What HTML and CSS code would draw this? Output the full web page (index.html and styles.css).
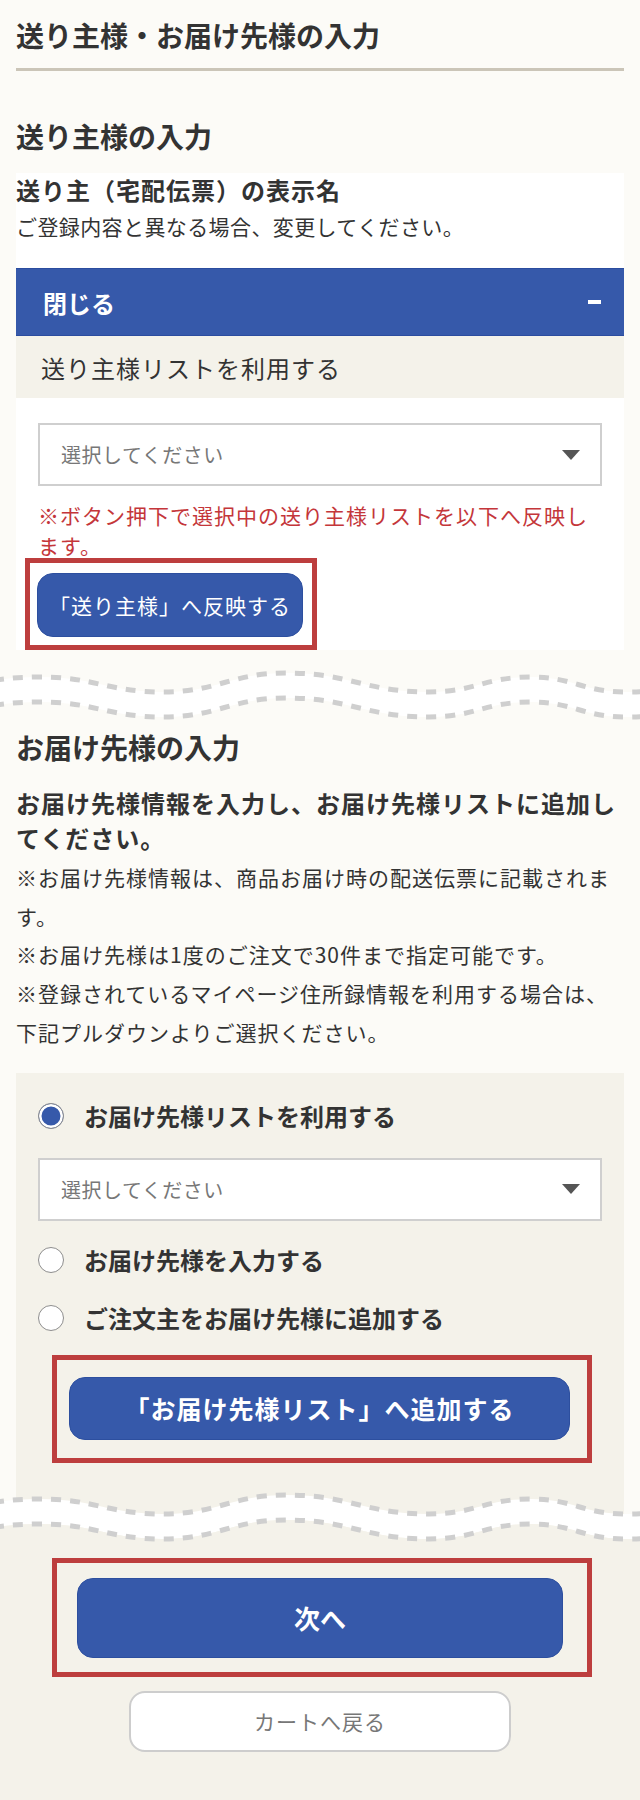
FILE: index.html
```html
<!DOCTYPE html>
<html lang="ja">
<head>
<meta charset="utf-8">
<title>送り主様・お届け先様の入力</title>
<link rel="stylesheet" href="styles.css">
</head>
<body>
<div class="page">
  <h1 class="page-title">送り主様・お届け先様の入力</h1>

  <section class="sender">
    <h2 class="sec-title sec-title-first">送り主様の入力</h2>
    <div class="sender-box">
      <p class="field-label">送り主（宅配伝票）の表示名</p>
      <p class="field-hint">ご登録内容と異なる場合、変更してください。</p>
      <div class="acc-head"><span>閉じる</span><span class="minus"></span></div>
      <div class="acc-sub">送り主様リストを利用する</div>
      <div class="acc-body">
        <div class="select"><span>選択してください</span><span class="caret"></span></div>
        <p class="warn">※ボタン押下で選択中の送り主様リストを以下へ反映します。</p>
        <div class="hl hl-reflect"><button class="btn btn-reflect">「送り主様」へ反映する</button></div>
      </div>
    </div>
  </section>

  <div class="wave wave-1">
    <svg width="640" height="70" viewBox="0 0 640 70">
      <g transform="translate(0,5)">
        <path class="band" d="M-100,30 C-37,30 -23,15 40,15 C95,15 108,30 163,30 C218,30 231,11 286,11 C350,11 365,30 429,30 C475,30 485,15 531,15 C573,15 583,30 625,30 C686,30 699,15 760,15 L760,40 C699,40 686,55 625,55 C583,55 573,40 531,40 C485,40 475,55 429,55 C365,55 350,36 286,36 C231,36 218,55 163,55 C108,55 95,40 40,40 C-23,40 -37,55 -100,55 Z"/>
        <path class="dash" d="M-100,30 C-37,30 -23,15 40,15 C95,15 108,30 163,30 C218,30 231,11 286,11 C350,11 365,30 429,30 C475,30 485,15 531,15 C573,15 583,30 625,30 C686,30 699,15 760,15"/>
        <path class="dash" d="M-100,55 C-37,55 -23,40 40,40 C95,40 108,55 163,55 C218,55 231,36 286,36 C350,36 365,55 429,55 C475,55 485,40 531,40 C573,40 583,55 625,55 C686,55 699,40 760,40"/>
      </g>
    </svg>
  </div>

  <section class="dest">
    <h2 class="sec-title">お届け先様の入力</h2>
    <p class="intro">お届け先様情報を入力し、お届け先様リストに追加してください。</p>
    <div class="notes">
      <p>※お届け先様情報は、商品お届け時の配送伝票に記載されます。</p>
      <p>※お届け先様は1度のご注文で30件まで指定可能です。</p>
      <p>※登録されているマイページ住所録情報を利用する場合は、下記プルダウンよりご選択ください。</p>
    </div>
    <div class="panel">
      <div class="radio-row"><span class="radio radio-on"></span><span class="radio-label">お届け先様リストを利用する</span></div>
      <div class="select select-dest"><span>選択してください</span><span class="caret"></span></div>
      <div class="radio-row radio-row-2"><span class="radio"></span><span class="radio-label">お届け先様を入力する</span></div>
      <div class="radio-row radio-row-3"><span class="radio"></span><span class="radio-label">ご注文主をお届け先様に追加する</span></div>
      <div class="hl hl-add"><button class="btn btn-add">「お届け先様リスト」へ追加する</button></div>
    </div>
  </section>

  <div class="wave wave-2">
    <svg width="640" height="70" viewBox="0 0 640 70">
      <g transform="translate(0,4)">
        <path class="band" d="M-100,30 C-37,30 -23,15 40,15 C95,15 108,30 163,30 C218,30 231,11 286,11 C350,11 365,30 429,30 C475,30 485,15 531,15 C573,15 583,30 625,30 C686,30 699,15 760,15 L760,40 C699,40 686,55 625,55 C583,55 573,40 531,40 C485,40 475,55 429,55 C365,55 350,36 286,36 C231,36 218,55 163,55 C108,55 95,40 40,40 C-23,40 -37,55 -100,55 Z"/>
        <path class="below" d="M-100,55 C-37,55 -23,40 40,40 C95,40 108,55 163,55 C218,55 231,36 286,36 C350,36 365,55 429,55 C475,55 485,40 531,40 C573,40 583,55 625,55 C686,55 699,40 760,40 L760,80 L-100,80 Z"/>
        <path class="dash" d="M-100,30 C-37,30 -23,15 40,15 C95,15 108,30 163,30 C218,30 231,11 286,11 C350,11 365,30 429,30 C475,30 485,15 531,15 C573,15 583,30 625,30 C686,30 699,15 760,15"/>
        <path class="dash" d="M-100,55 C-37,55 -23,40 40,40 C95,40 108,55 163,55 C218,55 231,36 286,36 C350,36 365,55 429,55 C475,55 485,40 531,40 C573,40 583,55 625,55 C686,55 699,40 760,40"/>
      </g>
    </svg>
  </div>

  <footer class="foot">
    <div class="hl hl-next"><button class="btn btn-next">次へ</button></div>
    <button class="btn-back">カートへ戻る</button>
  </footer>
</div>
</body>
</html>
```

FILE: styles.css
```css
* {
  box-sizing: border-box;
  margin: 0;
  padding: 0;
}

body {
  background: #fcfbf7;
  font-family: "Noto Sans CJK JP", "Noto Sans", sans-serif;
  color: #333;
}

.page {
  width: 640px;
}

.page-title {
  margin: 0 16px;
  padding: 15px 0 13px;
  font-size: 28px;
  line-height: 40px;
  font-weight: 700;
  border-bottom: 3px solid #cbc5b8;
}

.sec-title {
  margin: 0 16px;
  font-size: 28px;
  line-height: 40px;
  font-weight: 700;
}

.sec-title-first {
  margin-top: 45px;
}

.sender-box {
  margin: 17px 16px 0;
  background: #fff;
}

.field-label {
  font-size: 24px;
  line-height: 34px;
  font-weight: 700;
  letter-spacing: 1px;
}

.field-hint {
  margin-top: 4px;
  font-size: 21px;
  line-height: 30px;
  letter-spacing: 0.4px;
}

.acc-head {
  margin-top: 27px;
  height: 68px;
  background: #3659aa;
  border-top: 1px solid #2b4c9f;
  border-bottom: 1px solid #2b4c9f;
  display: flex;
  align-items: center;
  justify-content: space-between;
  padding: 0 23px 0 27px;
  color: #fff;
  font-size: 24px;
  font-weight: 700;
}

.minus {
  width: 13px;
  height: 4px;
  background: #fff;
}

.acc-sub {
  height: 62px;
  background: #f4f2ea;
  display: flex;
  align-items: center;
  padding-left: 25px;
  font-size: 24px;
  letter-spacing: 1px;
}

.acc-body {
  padding: 25px 22px 0;
}

.select {
  height: 63px;
  border: 2px solid #cfcfcf;
  background: #fff;
  display: flex;
  align-items: center;
  justify-content: space-between;
  padding: 0 20px 0 21px;
  font-size: 20px;
  color: #777;
  letter-spacing: 0.5px;
}

.caret {
  width: 0;
  height: 0;
  border-left: 9px solid transparent;
  border-right: 9px solid transparent;
  border-top: 10px solid #555;
}

.warn {
  margin-top: 14px;
  font-size: 21px;
  line-height: 30px;
  letter-spacing: 1px;
  color: #c4363a;
}

.hl {
  border: 5px solid #bd3e3e;
}

.hl-reflect {
  width: 292px;
  margin: -2px 0 0 -13px;
  padding: 10px 9px 8px 7px;
}

.btn {
  display: flex;
  align-items: center;
  justify-content: center;
  background: #3659aa;
  border: 1px solid #2d4f9f;
  border-radius: 16px;
  color: #fff;
  font-family: inherit;
}

.btn-reflect {
  width: 266px;
  height: 64px;
  font-size: 21px;
  letter-spacing: 1px;
  font-weight: 400;
}

.wave svg {
  display: block;
}

.wave-1 {
  margin-top: 7px;
}

.band {
  fill: #fff;
}

.below {
  fill: #f4f2ea;
}

.dash {
  fill: none;
  stroke: #cfcfcf;
  stroke-width: 5;
  stroke-dasharray: 10 9;
}

.intro {
  margin: 18px 16px 0;
  font-size: 24px;
  line-height: 35px;
  font-weight: 700;
  letter-spacing: 1px;
}

.notes {
  margin: 3px 16px 0;
  font-size: 21px;
  line-height: 38.7px;
  letter-spacing: 1px;
}

.panel {
  margin: 21px 16px 0;
  background: #f4f2ea;
  padding: 26px 22px 17px;
}

.radio-row {
  height: 34px;
  display: flex;
  align-items: center;
  gap: 20px;
}

.radio-row-2 {
  margin-top: 22px;
}

.radio-row-3 {
  margin-top: 24px;
}

.radio {
  flex: none;
  width: 26px;
  height: 26px;
  border-radius: 50%;
  border: 1.5px solid #8e8e8e;
  background: #fff;
}

.radio-on {
  background: #3659aa;
  box-shadow: inset 0 0 0 2.5px #fff;
}

.radio-label {
  font-size: 24px;
  font-weight: 700;
}

.select-dest {
  margin-top: 25px;
}

.hl-add {
  width: 540px;
  margin: 20px 0 0 14px;
  padding: 17px 17px 18px 12px;
}

.btn-add {
  width: 501px;
  height: 63px;
  font-size: 25px;
  font-weight: 700;
  letter-spacing: 1px;
}

.wave-2 {
  background: linear-gradient(to right, #fcfbf7 0, #fcfbf7 16px, #f4f2ea 16px, #f4f2ea 624px, #fcfbf7 624px);
}

.foot {
  background: #f4f2ea;
  padding: 8px 0 70px;
}

.hl-next {
  width: 540px;
  margin-left: 52px;
  padding: 15px 24px 14px 20px;
}

.btn-next {
  width: 486px;
  height: 80px;
  font-size: 26px;
  font-weight: 700;
}

.btn-back {
  display: flex;
  align-items: center;
  justify-content: center;
  width: 382px;
  height: 61px;
  margin: 14px auto 0;
  background: #fff;
  border: 2px solid #cdcdcd;
  border-radius: 16px;
  color: #777;
  font-family: inherit;
  font-size: 21px;
  letter-spacing: 1px;
}
```
